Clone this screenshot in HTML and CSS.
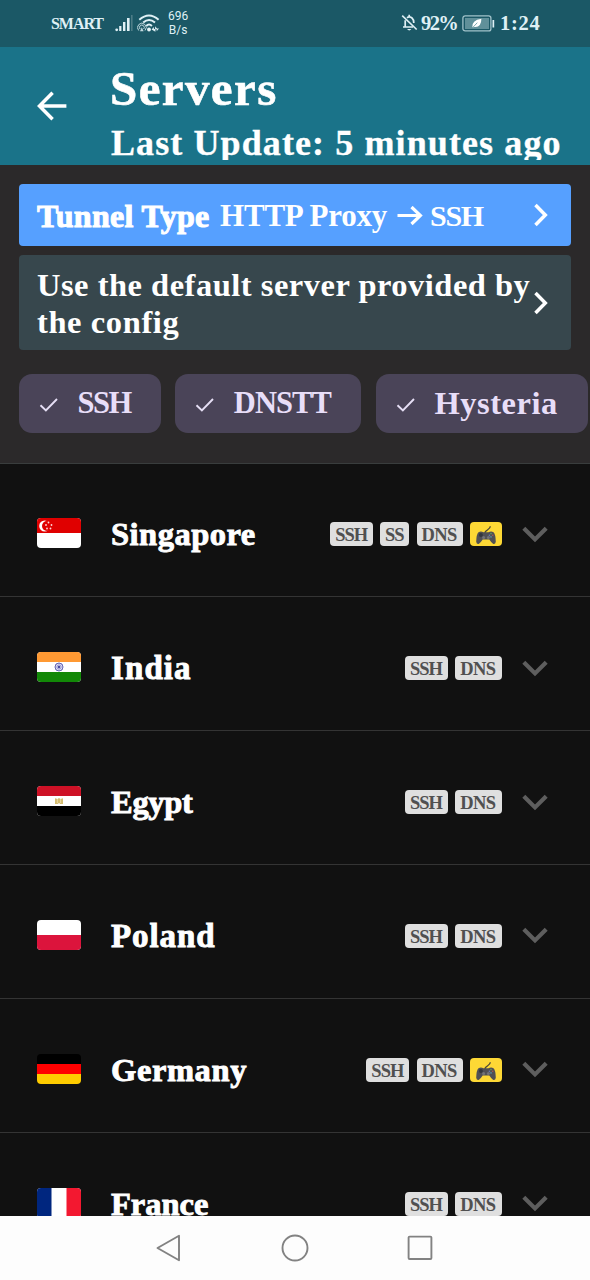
FILE: index.html
```html
<!DOCTYPE html>
<html lang="en">
<head>
<meta charset="utf-8">
<title>Servers</title>
<link rel="stylesheet" href="styles.css">
</head>
<body>
<svg class="defs" width="0" height="0">
  <symbol id="chev-down" viewBox="0 0 26 18"><path d="M1.8 2.2 13 13.4 24.2 2.2" fill="none" stroke="#5e5e5e" stroke-width="4.2"/></symbol>
  <symbol id="chev-right" viewBox="0 0 16 24"><path d="M2.5 2 12.3 12 2.5 22" fill="none" stroke="#fff" stroke-width="3.5"/></symbol>
  <symbol id="check" viewBox="0 0 20 16"><path d="M1.5 8.2 6.9 13.5 18 2" fill="none" stroke="#e6dff5" stroke-width="1.9"/></symbol>
  <symbol id="pad" viewBox="0 0 22 20">
    <path d="M10 8.5C9 5 15.5 5 15.3 1.2" fill="none" stroke="#4b4637" stroke-width="1.3"/>
    <path d="M3.5 7.2Q6 5.7 8.5 7.3H13.5Q16 5.7 18.5 7.2Q20.6 9 20.8 16.8Q20.3 19.6 18 18.8Q16.5 17.8 14.3 14.5H7.7Q5.5 17.8 4 18.8Q1.7 19.6 1.2 16.8Q1.4 9 3.5 7.2Z" fill="#505054"/>
    <circle cx="5.9" cy="10" r="2" fill="#34373e"/><circle cx="8.6" cy="12.6" r="1.5" fill="#747478"/><circle cx="13.4" cy="12.6" r="1.5" fill="#747478"/>
    <circle cx="16" cy="8.6" r=".8" fill="#65995c"/><circle cx="17.7" cy="10.3" r=".8" fill="#ae5652"/><circle cx="14.4" cy="10.2" r=".8" fill="#667bb8"/><circle cx="16" cy="11.9" r=".8" fill="#5895aa"/>
  </symbol>
</svg>
<div class="screen">
  <div class="status">
    <span class="carrier">SMART</span>
    <svg class="signal" width="18" height="18" viewBox="0 0 18 18"><g fill="#dff0f5"><circle cx="1.7" cy="15.8" r="1.4"/><rect x="4.2" y="12" width="2.2" height="5"/><rect x="8" y="8" width="2.4" height="9"/><rect x="12" y="4" width="2.6" height="13"/></g><rect x="16" y="1" width="1.6" height="16" fill="#4d7c87"/></svg>
    <svg class="wifi" width="23" height="18" viewBox="0 0 23 18"><g fill="none" stroke="#dff0f5" stroke-width="2"><path d="M2.3 5.8Q12-2.9 21.6 5.8"/><path d="M6.2 8.6Q12 3.5 18 8.6"/><path d="M9.3 12Q12 9.2 14.9 12"/></g><g fill="none" stroke="#c1d9df" stroke-width="1"><path d="M1.7 16.5A4.3 4.3 0 1 1 8 16.5M3 15A2.4 2.4 0 1 1 6.7 15"/></g><path d="m3 17.2 1.8-4 1.8 4Z" fill="#c1d9df"/><circle cx="12" cy="15.5" r="1.9" fill="#e7f4f7"/><path d="m14.5 15.5 2.4-2.5v2h1.2v-2.8l1.9 2.3h2l-2.3 2.7v-2h-1.3v2.6Z" fill="#dff0f5"/></svg>
    <span class="rate">696<br>B/s</span>
    <span class="grow"></span>
    <svg class="bell" width="17" height="18" viewBox="0 0 17 18"><path d="M4.2 6.3V13H2M6 3.8Q8.2 2 11 4Q12.8 5.6 12.8 9M4 13H12M8.2.8V3" fill="none" stroke="#dff0f5" stroke-width="1.7"/><path d="M6 15H10.4Q8.3 17.8 6 15Z" fill="#dff0f5"/><path d="M1.2 1.6 15.7 15.5" stroke="#dff0f5" stroke-width="1.6"/></svg>
    <span class="percent">92%</span>
    <svg class="battery" width="33" height="17" viewBox="0 0 33 17"><rect x=".9" y=".9" width="28" height="15" rx="2.2" fill="none" stroke="#a1c2ca" stroke-width="1.3"/><rect x="3" y="3" width="24" height="11" fill="#60909a"/><path d="M10.3 12.6Q9.5 5.2 19.4 3.8Q19.3 12.7 12.4 12Z" fill="#fff"/><path d="M10 13.3 15.3 7.7" stroke="#60909a" stroke-width=".8"/><rect x="30.5" y="5" width="1.7" height="7.5" fill="#dff0f5"/></svg>
    <span class="clock">1:24</span>
  </div>

  <header class="bar">
    <svg width="30" height="30" viewBox="0 0 30 30"><path d="M15.6 1.8 2.5 15 15.6 28.2M2.5 15H29.4" fill="none" stroke="#fff" stroke-width="3.5"/></svg>
    <div class="heading">
      <h1 class="title">Servers</h1>
      <div class="subtitle">Last Update: 5 minutes ago</div>
    </div>
  </header>

  <section class="panel">
    <div class="option tunnel">
      <div class="tunnel-text"><b class="heavy">Tunnel Type</b><span class="proxy">HTTP Proxy</span><svg class="arrow" width="26" height="20" viewBox="0 0 26 20"><path d="M.5 9.5H23M14.5 1 23.4 9.5 14.5 18" fill="none" stroke="#fff" stroke-width="3.2"/></svg><span class="ssh">SSH</span></div>
      <svg width="16" height="24"><use href="#chev-right"/></svg>
    </div>
    <div class="option default">
      <div class="default-text">Use the default server provided by<br><span class="line2">the config</span></div>
      <svg width="16" height="24"><use href="#chev-right"/></svg>
    </div>
    <div class="chips">
      <div class="chip chip-ssh"><svg width="20" height="16"><use href="#check"/></svg><span>SSH</span></div>
      <div class="chip chip-dnstt"><svg width="20" height="16"><use href="#check"/></svg><span>DNSTT</span></div>
      <div class="chip chip-hysteria"><svg width="20" height="16"><use href="#check"/></svg><span>Hysteria</span></div>
    </div>
  </section>

  <main class="list">
    <div class="row">
      <svg class="flag" width="44" height="30" viewBox="0 0 44 30"><rect width="44" height="30" fill="#fff"/><rect width="44" height="15" fill="#e00000"/><circle cx="7.7" cy="8" r="5.5" fill="#fff"/><circle cx="10" cy="8" r="5" fill="#e00000"/><g fill="#ffd5d5"><circle cx="11.5" cy="4.5" r=".9"/><circle cx="9" cy="7" r=".9"/><circle cx="14.5" cy="7" r=".9"/><circle cx="10" cy="10.5" r=".9"/><circle cx="13.5" cy="10.5" r=".9"/></g></svg>
      <span class="name singapore">Singapore</span>
      <span class="tags"><i class="tag t-ssh">SSH</i><i class="tag t-ss">SS</i><i class="tag t-dns">DNS</i><i class="tag game"><svg width="22" height="20"><use href="#pad"/></svg></i></span>
      <svg class="down" width="26" height="18"><use href="#chev-down"/></svg>
    </div>
    <div class="row">
      <svg class="flag" width="44" height="30" viewBox="0 0 44 30"><rect width="44" height="30" fill="#fff"/><rect width="44" height="10" fill="#ff9933"/><rect y="20" width="44" height="10" fill="#128807"/><circle cx="22" cy="15" r="4" fill="#dcdcf5" stroke="#6666b3" stroke-width="1"/><path d="M22 11v8M18 15h8M19.2 12.2l5.6 5.6M24.8 12.2l-5.6 5.6" stroke="#7777bd" stroke-width=".6"/><circle cx="22" cy="15" r="1.2" fill="#4949a0"/></svg>
      <span class="name india">India</span>
      <span class="tags"><i class="tag t-ssh">SSH</i><i class="tag t-dns">DNS</i></span>
      <svg class="down" width="26" height="18"><use href="#chev-down"/></svg>
    </div>
    <div class="row">
      <svg class="flag" width="44" height="30" viewBox="0 0 44 30"><rect width="44" height="30" fill="#fff"/><rect width="44" height="10" fill="#ce1126"/><rect y="20" width="44" height="10" fill="#000"/><path d="M18 12.2 20.5 13 22 12 23.5 13 26 12.2V18H23.3L22 17 20.7 18H18Z" fill="#d5bd70"/><path d="M20.4 13v4M23.6 13v4" stroke="#f0e4bd" stroke-width=".7"/></svg>
      <span class="name egypt">Egypt</span>
      <span class="tags"><i class="tag t-ssh">SSH</i><i class="tag t-dns">DNS</i></span>
      <svg class="down" width="26" height="18"><use href="#chev-down"/></svg>
    </div>
    <div class="row">
      <svg class="flag" width="44" height="30" viewBox="0 0 44 30"><rect width="44" height="30" fill="#fff"/><rect y="15" width="44" height="15" fill="#dc143c"/></svg>
      <span class="name poland">Poland</span>
      <span class="tags"><i class="tag t-ssh">SSH</i><i class="tag t-dns">DNS</i></span>
      <svg class="down" width="26" height="18"><use href="#chev-down"/></svg>
    </div>
    <div class="row">
      <svg class="flag" width="44" height="30" viewBox="0 0 44 30"><rect width="44" height="30" fill="#000"/><rect y="10" width="44" height="10" fill="#f00"/><rect y="20" width="44" height="10" fill="#fc0"/></svg>
      <span class="name germany">Germany</span>
      <span class="tags"><i class="tag t-ssh">SSH</i><i class="tag t-dns">DNS</i><i class="tag game"><svg width="22" height="20"><use href="#pad"/></svg></i></span>
      <svg class="down" width="26" height="18"><use href="#chev-down"/></svg>
    </div>
    <div class="row">
      <svg class="flag" width="44" height="30" viewBox="0 0 44 30"><rect width="44" height="30" fill="#fff"/><rect width="14.5" height="30" fill="#00267f"/><rect x="29.5" width="14.5" height="30" fill="#f31830"/></svg>
      <span class="name france">France</span>
      <span class="tags"><i class="tag t-ssh">SSH</i><i class="tag t-dns">DNS</i></span>
      <svg class="down" width="26" height="18"><use href="#chev-down"/></svg>
    </div>
  </main>

  <nav class="nav">
    <svg width="26" height="28" viewBox="0 0 26 28"><path d="M1.5 14 23 1.7V26.3Z" fill="none" stroke="#828282" stroke-width="1.9" stroke-linejoin="round"/></svg>
    <svg width="28" height="28" viewBox="0 0 28 28"><circle cx="14" cy="14" r="12.5" fill="none" stroke="#828282" stroke-width="1.9"/></svg>
    <svg width="26" height="26" viewBox="0 0 26 26"><rect x="1.6" y="1.6" width="22.8" height="22.4" rx="1" fill="none" stroke="#828282" stroke-width="1.9"/></svg>
  </nav>
</div>
</body>
</html>
```
FILE: styles.css
```css
* { box-sizing: border-box; }
body { margin: 0; background: #111; font-family: "Liberation Serif", serif; font-weight: 700; color: #fff; }
svg { display: block; flex: none; }
.defs { position: absolute; }
.screen { width: 590px; height: 1280px; display: flex; flex-direction: column; overflow: hidden; white-space: nowrap; }

.status { flex: none; height: 46.5px; padding: 0 50px 0 51px; display: flex; align-items: center; background: #1b5866; color: #dff0f5; }
.carrier { font-size: 16px; letter-spacing: -1.05px; width: 64px; padding-top: 2px; }
.signal { margin-right: 4px; }
.wifi { margin-right: 8px; }
.rate { font: 400 12px/14.5px Roboto, sans-serif; text-align: center; }
.grow { flex: 1; }
.bell { margin-right: 3px; }
.percent { font-size: 20.5px; letter-spacing: -1.6px; width: 41px; padding-top: 1px; }
.battery { margin-right: 5px; }
.clock { font-size: 20.5px; letter-spacing: .7px; width: 40px; padding-top: 1px; }

.bar { flex: none; height: 118px; padding-left: 37px; display: grid; grid-template-columns: 73px 1fr; align-items: center; background: #1a7389; }
.heading { padding-top: 10px; }
.title { margin: 0 0 10px; font-size: 49px; line-height: 56px; letter-spacing: 1.4px; -webkit-text-stroke: .6px #fff; }
.subtitle { font-size: 36px; line-height: 33px; letter-spacing: 1.1px; padding-left: 1px; overflow: hidden; -webkit-text-stroke: .3px #fff; }

.panel { flex: none; height: 299px; padding: 19px 0 0 19px; background: #2b292a; border-bottom: 1px solid #393d3d; }
.option { width: 552px; padding: 0 22px 0 18px; display: flex; align-items: center; justify-content: space-between; border-radius: 4px; font-size: 32px; }
.tunnel { height: 62.5px; background: #56a0ff; margin-bottom: 9px; }
.tunnel-text { display: flex; align-items: center; padding-top: 3px; }
.heavy { width: 183px; letter-spacing: .3px; -webkit-text-stroke: 1px #fff; }
.proxy { width: 177px; font-size: 31px; letter-spacing: -.2px; }
.arrow { margin-right: 7px; }
.ssh { font-size: 30px; letter-spacing: -1.3px; }
.default { height: 95px; background: #37474d; }
.default-text { width: 496px; font-size: 32.5px; line-height: 37px; letter-spacing: .5px; padding-top: 3px; }
.line2 { letter-spacing: .6px; }

.chips { display: flex; gap: 14.8px; margin-top: 24px; }
.chip { flex: none; height: 58.5px; padding-left: 20px; display: flex; align-items: center; gap: 18.5px; border-radius: 13px; background: #4a4458; color: #e8def8; font-size: 30.5px; }
.chip svg { margin-top: 3px; }
.chip span { padding-top: 1px; }
.chip-ssh { width: 141.5px; letter-spacing: -1.5px; }
.chip-dnstt { width: 186px; letter-spacing: -.9px; }
.chip-hysteria { width: 211.5px; font-size: 32.5px; letter-spacing: .5px; }

.list { flex: 1; min-height: 0; overflow: hidden; }
.row { height: 133.85px; padding: 7px 42px 0 37px; display: flex; align-items: center; border-bottom: 1.3px solid #343434; }
.flag { border-radius: 4px; margin-right: 29px; }
.name { flex: 1; font-size: 32.5px; line-height: 37px; overflow: hidden; padding: 3px 0 0 1px; -webkit-text-stroke: .9px #fff; }
.singapore { letter-spacing: .5px; }
.india { font-size: 33px; letter-spacing: 1.1px; }
.egypt { letter-spacing: -.3px; }
.poland { font-size: 33px; letter-spacing: .9px; }
.germany { letter-spacing: .6px; }
.france { letter-spacing: 0; }
.tags { display: flex; gap: 7.2px; margin: 2px 20.5px 0 0; }
.down { margin-top: 3px; }
.tag { height: 24px; border-radius: 4px; background: #dfdfdf; color: #505050; font-size: 18.5px; line-height: 26px; font-style: normal; text-align: center; letter-spacing: -1px; padding-right: 1px; }
.t-ssh { width: 43px; }
.t-ss { width: 29px; }
.t-dns { width: 46.3px; letter-spacing: -.6px; }
.game { width: 31.5px; padding: 3px 0 0 5px; background: #fdd835; }

.nav { flex: none; height: 64px; padding: 0 157px 0 156px; display: flex; align-items: center; justify-content: space-between; background: #fdfdfd; }
```
